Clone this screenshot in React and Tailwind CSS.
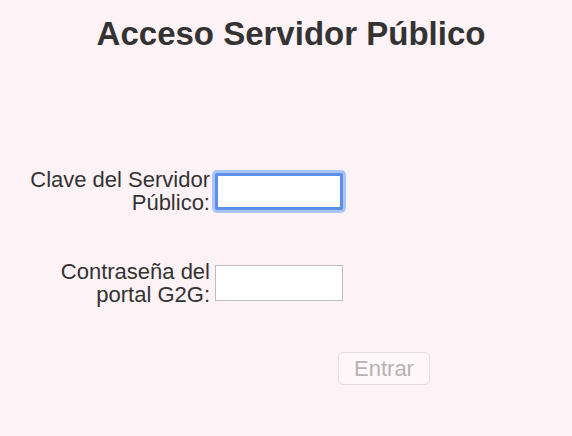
import React from "react";

export default function App() {
  return (
    <div className="min-h-[436px] w-full bg-[#fdf2f6] font-['Liberation_Sans',Arial,sans-serif] text-[#333333]">
      <h1 className="pl-[10px] pt-[15px] text-center text-[33px] font-bold leading-[38px]">
        Acceso Servidor Público
      </h1>

      <div className="mt-[115px] flex flex-col">
        <div className="flex items-center">
          <label className="w-[210px] text-right text-[22px] leading-[23px]">
            Clave del Servidor
            <br />
            Público:
          </label>
          <input
            type="text"
            autoFocus
            className="ml-[5px] h-[37px] w-[128px] rounded-[2px] border-[3px] border-[#5b8fe8] bg-white outline-none ring-[3px] ring-[#a8c5f5]"
          />
        </div>

        <div className="mt-[46px] flex items-center">
          <label className="w-[210px] text-right text-[22px] leading-[23px]">
            Contraseña del
            <br />
            portal G2G:
          </label>
          <input
            type="password"
            className="ml-[5px] h-[36px] w-[128px] border border-[#bdbdbd] bg-white outline-none"
          />
        </div>

        <div className="mt-[46px] flex">
          <button
            disabled
            className="ml-[338px] h-[33px] w-[92px] rounded-[5px] border border-[#ead9df] bg-[#fff7fa] text-[22px] leading-[26px] text-[#b8b2b4]"
          >
            Entrar
          </button>
        </div>
      </div>
    </div>
  );
}
